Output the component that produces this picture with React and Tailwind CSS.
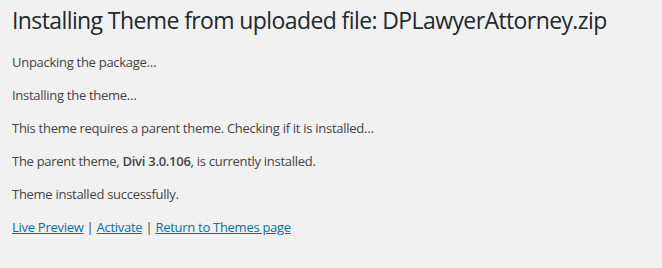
export default function App() {
  return (
    <div className="min-h-screen bg-[#f1f1f1] px-3 font-['Open_Sans',sans-serif] text-[13px] leading-[20px] tracking-[-0.28px] text-[#444]">
      <h1 className="pt-[6px] pb-[3px] text-[23px] font-normal leading-[1.3] tracking-[-0.6px] text-[#23282d]">
        Installing Theme from uploaded file: DPLawyerAttorney.zip
      </h1>
      <p className="my-[13px]">Unpacking the package&hellip;</p>
      <p className="my-[13px]">Installing the theme&hellip;</p>
      <p className="my-[13px]">This theme requires a parent theme. Checking if it is installed&hellip;</p>
      <p className="my-[13px]">
        The parent theme, <strong className="font-semibold">Divi 3.0.106</strong>, is currently installed.
      </p>
      <p className="my-[13px]">Theme installed successfully.</p>
      <p className="my-[13px]">
        <a href="#" className="text-[#0073aa] underline">Live Preview</a> |{" "}
        <a href="#" className="text-[#0073aa] underline">Activate</a> |{" "}
        <a href="#" className="text-[#0073aa] underline">Return to Themes page</a>
      </p>
    </div>
  );
}
